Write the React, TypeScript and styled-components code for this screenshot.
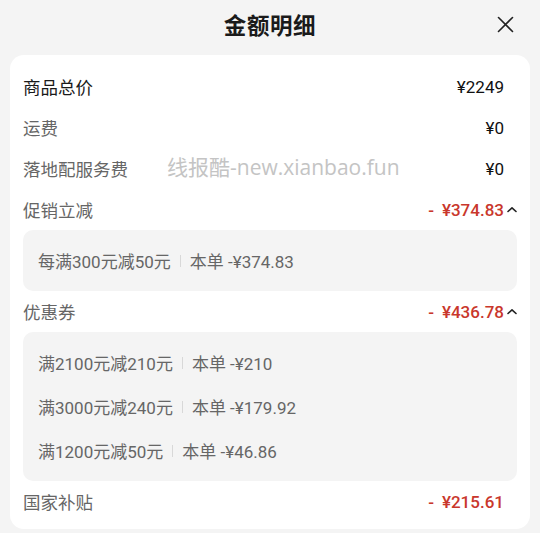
import React from "react";
import styled, { createGlobalStyle } from "styled-components";

const Global = createGlobalStyle`
  html, body { margin: 0; padding: 0; background: #f4f4f4; }
  body { font-family: Roboto, "Noto Sans CJK SC", sans-serif; -webkit-font-smoothing: antialiased; }
`;

const Page = styled.div`
  width: 540px;
  height: 533px;
  background: #f4f4f4;
  position: relative;
  overflow: hidden;
`;

const Header = styled.div`
  height: 48px;
  display: grid;
  grid-template-columns: 1fr auto 1fr;
  align-items: center;
`;

const Title = styled.div`
  grid-column: 2;
  font-family: "Noto Sans CJK SC", sans-serif;
  font-size: 22.5px;
  font-weight: 700;
  color: #1a1a1a;
  letter-spacing: 0.6px;
`;

const Close = styled.button`
  grid-column: 3;
  justify-self: end;
  margin-right: 26px;
  width: 18px;
  height: 18px;
  padding: 0;
  border: 0;
  background: transparent;
  display: flex;
  align-items: center;
  justify-content: center;
`;

const Card = styled.div`
  margin: 7px 10px 0;
  background: #fff;
  border-radius: 14px;
  padding: 11px 13px 7px;
`;

const Row = styled.div`
  height: 41px;
  display: flex;
  align-items: center;
  justify-content: space-between;
`;

const Label = styled.span<{ $strong?: boolean }>`
  font-family: "Noto Sans CJK SC", sans-serif;
  font-size: 17.5px;
  color: ${(p) => (p.$strong ? "#1a1a1a" : "#666")};
`;

const ValueWrap = styled.div`
  display: flex;
  align-items: center;
`;

const Value = styled.span<{ $red?: boolean }>`
  font-family: Roboto, "Noto Sans CJK SC", sans-serif;
  font-size: 17px;
  font-weight: ${(p) => (p.$red ? 500 : 400)};
  color: ${(p) => (p.$red ? "#c9372c" : "#111")};
  display: flex;
  align-items: center;
`;

const Dash = styled.span`
  margin-right: 8px;
`;

const Slot = styled.span`
  width: 13px;
  display: flex;
  justify-content: flex-end;
  align-items: center;
`;

const Box = styled.div`
  background: #f4f4f4;
  border-radius: 10px;
  padding: 8.5px 15px;
`;

const Item = styled.div`
  height: 44px;
  display: flex;
  align-items: center;
  font-family: Roboto, "Noto Sans CJK SC", sans-serif;
  font-size: 17px;
  color: #666;
`;

const Sep = styled.span`
  width: 1px;
  height: 12px;
  background: #d8d8d8;
  margin: 0 9px;
`;

const Watermark = styled.div`
  position: absolute;
  left: 167px;
  top: 151px;
  font-family: "Open Sans", "Noto Sans CJK SC", sans-serif;
  font-size: 21px;
  color: #c4c4c4;
  white-space: nowrap;
  pointer-events: none;
`;

const Chevron = () => (
  <svg width="10" height="7" viewBox="0 0 10 7">
    <path d="M1 5.5 L5 1.8 L9 5.5" fill="none" stroke="#222" strokeWidth="1.6" strokeLinecap="round" strokeLinejoin="round" />
  </svg>
);

type Line = { label: string; value: string; strong?: boolean; red?: boolean; chevron?: boolean };

const PriceRow = ({ label, value, strong, red, chevron }: Line) => (
  <Row>
    <Label $strong={strong}>{label}</Label>
    <ValueWrap>
      <Value $red={red}>
        {red ? <Dash>-</Dash> : null}
        {value}
      </Value>
      <Slot>{chevron ? <Chevron /> : null}</Slot>
    </ValueWrap>
  </Row>
);

const Promo = ({ rule, amount }: { rule: string; amount: string }) => (
  <Item>
    <span>{rule}</span>
    <Sep />
    <span>本单 -¥{amount}</span>
  </Item>
);

export default function App() {
  return (
    <Page>
      <Global />
      <Header>
        <Title>金额明细</Title>
        <Close aria-label="关闭">
          <svg width="17" height="17" viewBox="0 0 17 17">
            <path d="M1.5 1.5 L15.5 15.5 M15.5 1.5 L1.5 15.5" stroke="#222" strokeWidth="1.6" strokeLinecap="round" />
          </svg>
        </Close>
      </Header>
      <Card>
        <PriceRow label="商品总价" value="¥2249" strong />
        <PriceRow label="运费" value="¥0" />
        <PriceRow label="落地配服务费" value="¥0" />
        <PriceRow label="促销立减" value="¥374.83" red chevron />
        <Box>
          <Promo rule="每满300元减50元" amount="374.83" />
        </Box>
        <PriceRow label="优惠券" value="¥436.78" red chevron />
        <Box>
          <Promo rule="满2100元减210元" amount="210" />
          <Promo rule="满3000元减240元" amount="179.92" />
          <Promo rule="满1200元减50元" amount="46.86" />
        </Box>
        <PriceRow label="国家补贴" value="¥215.61" red />
      </Card>
      <Watermark>线报酷-new.xianbao.fun</Watermark>
    </Page>
  );
}
